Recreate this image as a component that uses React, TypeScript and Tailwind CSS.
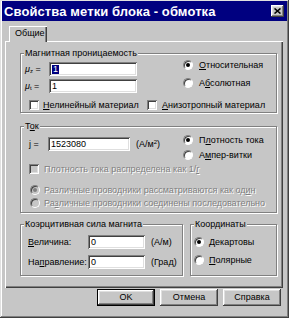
import React from "react";

const GRAY = "bg-[#c6c6c6]";
const RAISED =
  "shadow-[inset_-1px_-1px_#404040,inset_1px_1px_#ffffff,inset_-2px_-2px_#808080,inset_2px_2px_#dfdfdf]";
const SUNKEN =
  "shadow-[inset_1px_1px_#808080,inset_-1px_-1px_#ffffff,inset_2px_2px_#404040,inset_-2px_-2px_#dfdfdf]";

function U({ children }: { children: React.ReactNode }) {
  return <span className="underline underline-offset-[1px]">{children}</span>;
}

function Radio({ checked, disabled }: { checked?: boolean; disabled?: boolean }) {
  return (
    <span
      className={`w-[10px] h-[10px] rounded-full shrink-0 flex items-center justify-center border border-t-[#808080] border-l-[#808080] border-r-white border-b-white ${
        disabled ? "bg-[#c6c6c6]" : "bg-white"
      } shadow-[inset_1px_1px_#404040]`}
    >
      {checked && (
        <span className={`w-[4px] h-[4px] rounded-full ${disabled ? "bg-[#808080]" : "bg-black"}`} />
      )}
    </span>
  );
}

function Check({ disabled }: { disabled?: boolean }) {
  return (
    <span
      className={`w-[10px] h-[10px] shrink-0 ${disabled ? "bg-[#c6c6c6]" : "bg-white"} ${SUNKEN}`}
    />
  );
}

function Input({ w, children }: { w: string; children?: React.ReactNode }) {
  return (
    <div className={`${w} h-[14px] shrink-0 bg-white ${SUNKEN} flex items-center pl-[3px] leading-none`}>
      {children}
    </div>
  );
}

function Group({
  title,
  className,
  children,
}: {
  title: React.ReactNode;
  className: string;
  children: React.ReactNode;
}) {
  return (
    <div
      className={`border border-[#808080] shadow-[inset_1px_1px_#ffffff,1px_1px_#ffffff] ${className}`}
    >
      <div className={`-mt-[6px] ml-[3px] px-[1px] w-fit ${GRAY} leading-[11px] h-[11px]`}>
        {title}
      </div>
      {children}
    </div>
  );
}

const DIS = "text-[#808080] [text-shadow:1px_1px_0_#ffffff]";

export default function App() {
  return (
    <div
      className={`w-[289px] h-[318px] ${GRAY} font-['Liberation_Sans',Arial,sans-serif] text-[9px] whitespace-nowrap text-black flex flex-col px-[2px] pt-[1px] overflow-hidden shadow-[inset_-1px_-1px_#404040,inset_1px_1px_#e0e0e0,inset_-2px_-2px_#808080,inset_2px_2px_#ffffff]`}
    >
      {/* Title bar */}
      <div className="h-[20px] shrink-0 bg-[#000080] flex items-center justify-between pl-[2px] pr-[3px]">
        <span className="text-white font-bold text-[13px] leading-none tracking-[0.1px]">
          Свойства метки блока - обмотка
        </span>
        <div className={`w-[13px] h-[12px] ${GRAY} ${RAISED} flex items-center justify-center`}>
          <svg width="7" height="6" viewBox="0 0 7 6">
            <path d="M0.5 0.5 L6.5 5.5 M6.5 0.5 L0.5 5.5" stroke="#000" strokeWidth="1.6" />
          </svg>
        </div>
      </div>

      {/* Tab */}
      <div className="mt-[5px] ml-[7px] flex relative z-10 -mb-[1px]">
        <div
          className={`w-[38px] h-[16px] ${GRAY} shadow-[inset_1px_1px_#ffffff,inset_-1px_0_#404040,inset_-2px_0_#808080] flex items-center pl-[6px] pb-[1px] leading-none`}
        >
          Общие
        </div>
      </div>

      {/* Panel */}
      <div
        className={`ml-[3px] w-[278px] h-[247px] shrink-0 ${GRAY} shadow-[inset_1px_1px_#ffffff,inset_-1px_-1px_#404040,inset_-2px_-2px_#808080] pt-[12px] pl-[15px] flex flex-col`}
      >
        {/* Магнитная проницаемость */}
        <Group title="Магнитная проницаемость" className="w-[257px] h-[60px] shrink-0">
          <div className="flex">
            <div className="w-[162px] flex flex-col">
              <div className="mt-[3px] h-[14px] flex items-center">
                <span className="ml-[4px] w-[24px] italic leading-none">
                  μ<sub className="text-[6px] not-italic">z</sub>
                  <span className="not-italic"> =</span>
                </span>
                <Input w="w-[88px]">
                  <span className="bg-[#000080] text-white px-[1px]">1</span>
                </Input>
              </div>
              <div className="mt-[3px] h-[14px] flex items-center">
                <span className="ml-[4px] w-[24px] italic leading-none">
                  μ<sub className="text-[6px] not-italic">t</sub>
                  <span className="not-italic"> =</span>
                </span>
                <Input w="w-[88px]">1</Input>
              </div>
            </div>
            <div className="flex flex-col">
              <div className="mt-[1px] h-[10px] flex items-center gap-[6px]">
                <Radio checked />
                <span className="leading-none">
                  <U>О</U>тносительная
                </span>
              </div>
              <div className="mt-[8px] h-[10px] flex items-center gap-[6px]">
                <Radio />
                <span className="leading-none">
                  А<U>б</U>солютная
                </span>
              </div>
            </div>
          </div>
          <div className="mt-[6px] h-[12px] flex items-center pl-[8px]">
            <div className="w-[118px] flex items-center gap-[4px]">
              <Check />
              <span className="leading-none">
                <U>Н</U>елинейный материал
              </span>
            </div>
            <div className="flex items-center gap-[5px]">
              <Check />
              <span className="leading-none">
                <U>А</U>низотропный материал
              </span>
            </div>
          </div>
        </Group>

        {/* Ток */}
        <Group
          title={
            <>
              Т<U>о</U>к
            </>
          }
          className="mt-[13px] w-[257px] h-[87px] shrink-0"
        >
          <div className="flex">
            <div className="w-[162px] flex flex-col">
              <div className="mt-[5px] h-[14px] flex items-center">
                <span className="ml-[8px] w-[19px] leading-none">j =</span>
                <Input w="w-[82px]">1523080</Input>
                <span className="ml-[6px] leading-none">
                  (A/м<sup className="text-[6px]">2</sup>)
                </span>
              </div>
            </div>
            <div className="flex flex-col">
              <div className="mt-[3px] h-[10px] flex items-center gap-[6px]">
                <Radio checked />
                <span className="leading-none">
                  П<U>л</U>отность тока
                </span>
              </div>
              <div className="mt-[5px] h-[10px] flex items-center gap-[6px]">
                <Radio />
                <span className="leading-none">
                  А<U>м</U>пер-витки
                </span>
              </div>
            </div>
          </div>
          <div className="mt-[4px] h-[10px] flex items-center pl-[8px] gap-[5px]">
            <Check disabled />
            <span className={`leading-none ${DIS}`}>
              Плотность тока распределена как 1/<U>r</U>
            </span>
          </div>
          <div className="mt-[11px] h-[10px] flex items-center pl-[9px] gap-[4px]">
            <Radio checked disabled />
            <span className={`leading-none ${DIS}`}>
              Различные проводники рассматриваются как од<U>и</U>н
            </span>
          </div>
          <div className="mt-[3px] h-[10px] flex items-center pl-[9px] gap-[4px]">
            <Radio disabled />
            <span className={`leading-none ${DIS}`}>
              Ра<U>з</U>личные проводники соединены последовательно
            </span>
          </div>
        </Group>

        {/* Bottom groups */}
        <div className="mt-[11px] flex gap-[7px]">
          <Group title="Коэрцитивная сила магнита" className="w-[163px] h-[52px] shrink-0">
            <div className="mt-[5px] h-[14px] flex items-center">
              <span className="ml-[7px] w-[60px] leading-none">
                <U>В</U>еличина:
              </span>
              <Input w="w-[57px]">0</Input>
              <span className="ml-[6px] leading-none">(A/м)</span>
            </div>
            <div className="mt-[6px] h-[14px] flex items-center">
              <span className="ml-[7px] w-[60px] leading-none">
                На<U>п</U>равление:
              </span>
              <Input w="w-[57px]">0</Input>
              <span className="ml-[6px] leading-none">(Град)</span>
            </div>
          </Group>
          <Group title="Координаты" className="w-[87px] h-[52px] shrink-0">
            <div className="mt-[7px] h-[10px] flex items-center gap-[5px] pl-[3px]">
              <Radio checked />
              <span className="leading-none">
                <U>Д</U>екартовы
              </span>
            </div>
            <div className="mt-[8px] h-[10px] flex items-center gap-[5px] pl-[3px]">
              <Radio />
              <span className="leading-none">
                <U>П</U>олярные
              </span>
            </div>
          </Group>
        </div>
      </div>

      {/* Buttons */}
      <div className="mt-[1px] flex justify-end gap-[5px] pr-[6px]">
        <div
          className={`w-[58px] h-[17px] border border-black ${GRAY} ${RAISED} flex items-center justify-center leading-none`}
        >
          OK
        </div>
        <div className={`w-[58px] h-[17px] ${GRAY} ${RAISED} flex items-center justify-center leading-none`}>
          Отмена
        </div>
        <div className={`w-[58px] h-[17px] ${GRAY} ${RAISED} flex items-center justify-center leading-none`}>
          Справка
        </div>
      </div>
    </div>
  );
}
